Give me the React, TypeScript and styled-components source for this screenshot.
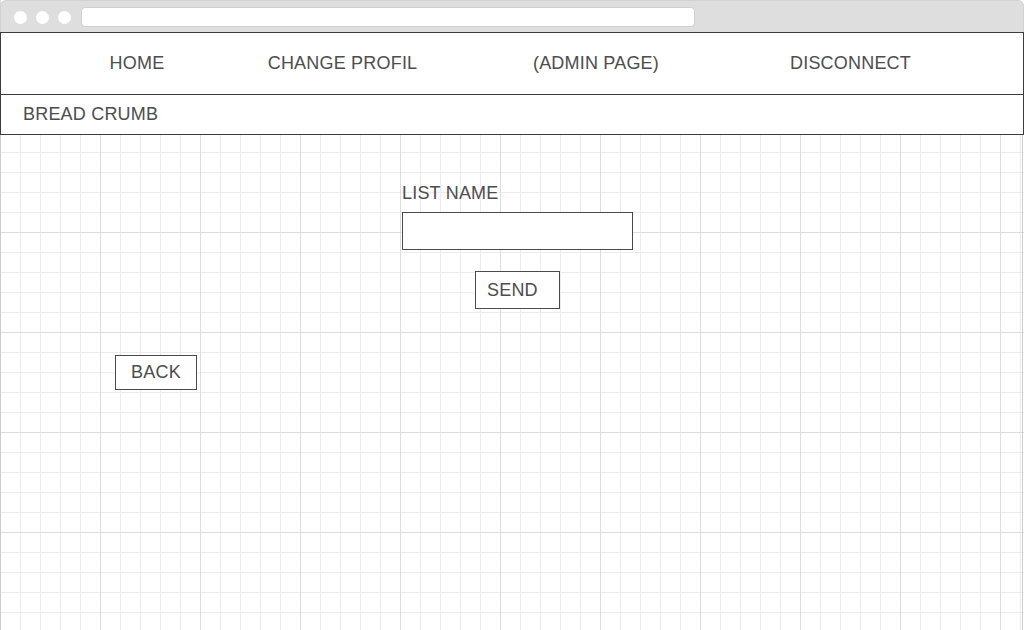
import React from "react";
import styled, { createGlobalStyle } from "styled-components";

const Global = createGlobalStyle`
  html, body { margin: 0; padding: 0; background: #ffffff; }
  body { font-family: "Liberation Sans", Arial, sans-serif; letter-spacing: 0.2px; }
  * { box-sizing: border-box; }
`;

const Window = styled.div`
  width: 1024px;
  height: 630px;
  display: flex;
  flex-direction: column;
  overflow: hidden;
  background-color: #ffffff;
  background-image:
    linear-gradient(to right, #dcdcdc 1px, transparent 1px),
    linear-gradient(to bottom, #dcdcdc 1px, transparent 1px),
    linear-gradient(to right, #ececec 1px, transparent 1px),
    linear-gradient(to bottom, #ececec 1px, transparent 1px);
  background-size: 100px 100px, 100px 100px, 20px 20px, 20px 20px;
  background-position: 0 32px, 0 32px, 0 32px, 0 32px;
`;

const Chrome = styled.div`
  height: 32px;
  flex: none;
  background: #dedede;
  border-radius: 6px 6px 0 0;
  border: 1px solid #d2d2d2;
  border-bottom: none;
  display: flex;
  align-items: center;
  padding: 0 0 0 13px;
  gap: 9px;
`;

const Dot = styled.span`
  width: 13px;
  height: 13px;
  border-radius: 50%;
  background: #ffffff;
  margin-top: 2px;
`;

const Address = styled.div`
  margin-left: 1px;
  width: 614px;
  height: 20px;
  margin-top: 1px;
  background: #ffffff;
  border: 1px solid #cfcfcf;
  border-radius: 4px;
`;

const Nav = styled.nav`
  height: 63px;
  flex: none;
  background: #ffffff;
  border: 1px solid #3c3c3c;
  display: grid;
  grid-template-columns: 206px 205px 302px 207px;
  padding-left: 33px;
  align-items: center;
`;

const NavItem = styled.span`
  text-align: center;
  font-size: 18px;
  color: #4d4d4d;
  white-space: nowrap;
`;

const Crumb = styled.div`
  height: 40px;
  flex: none;
  background: #ffffff;
  border: 1px solid #3c3c3c;
  border-top: none;
  display: flex;
  align-items: center;
  padding-left: 22px;
  font-size: 18px;
  color: #4d4d4d;
`;

const Main = styled.main`
  flex: 1;
  border-left: 1px solid #cdcdcd;
  border-right: 1px solid #cdcdcd;
  margin-right: 1px;
  padding-top: 48px;
  display: flex;
  flex-direction: column;
`;

const Form = styled.div`
  margin-left: 401px;
  width: 231px;
  display: flex;
  flex-direction: column;
  align-items: center;
`;

const Label = styled.label`
  align-self: stretch;
  font-size: 18px;
  line-height: 21px;
  color: #4d4d4d;
  margin-bottom: 8px;
`;

const Input = styled.div`
  align-self: stretch;
  height: 38px;
  background: #ffffff;
  border: 1px solid #4a4a4a;
`;

const Button = styled.div<{ $w: number; $h: number; $left?: number }>`
  width: ${(p) => p.$w}px;
  height: ${(p) => p.$h}px;
  background: #ffffff;
  border: 1px solid #4a4a4a;
  display: flex;
  align-items: center;
  justify-content: ${(p) => (p.$left !== undefined ? "flex-start" : "center")};
  padding-left: ${(p) => (p.$left !== undefined ? p.$left : 0)}px;
  font-size: 18px;
  color: #4d4d4d;
`;

const SendWrap = styled.div`
  margin-top: 21px;
`;

const BackWrap = styled.div`
  margin-top: 46px;
  margin-left: 114px;
`;

export default function App() {
  return (
    <>
      <Global />
      <Window>
        <Chrome>
          <Dot />
          <Dot />
          <Dot />
          <Address />
        </Chrome>
        <Nav>
          <NavItem>HOME</NavItem>
          <NavItem>CHANGE PROFIL</NavItem>
          <NavItem>(ADMIN PAGE)</NavItem>
          <NavItem>DISCONNECT</NavItem>
        </Nav>
        <Crumb>BREAD CRUMB</Crumb>
        <Main>
          <Form>
            <Label>LIST NAME</Label>
            <Input />
            <SendWrap>
              <Button $w={85} $h={38} $left={11}>SEND</Button>
            </SendWrap>
          </Form>
          <BackWrap>
            <Button $w={82} $h={35}>BACK</Button>
          </BackWrap>
        </Main>
      </Window>
    </>
  );
}
